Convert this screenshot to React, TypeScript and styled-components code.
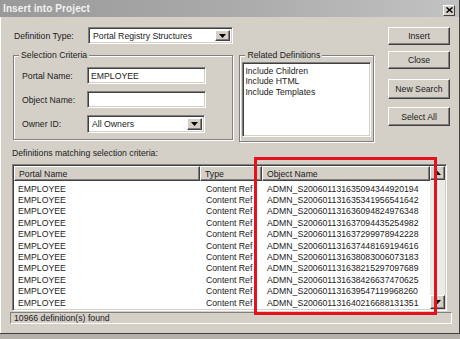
import React from 'react';
import styled, { createGlobalStyle } from 'styled-components';

const rows = [
  'ADMN_S20060113163509434492019 4',
  'ADMN_S20060113163534195654164 2',
  'ADMN_S20060113163609482497634 8',
  'ADMN_S20060113163709443525498 2',
  'ADMN_S20060113163729997894222 8',
  'ADMN_S20060113163744816919461 6',
  'ADMN_S20060113163808300607318 3',
  'ADMN_S20060113163821529709768 9',
  'ADMN_S20060113163842663747062 5',
  'ADMN_S20060113163954711996826 0',
  'ADMN_S20060113164021668813135 1',
].map((s) => s.replace(' ', ''));

const columns = [
  { title: 'Portal Name', width: 186 },
  { title: 'Type', width: 62 },
  { title: 'Object Name', width: 168 },
];

const ArrowDown = () => (
  <svg width="7" height="4" viewBox="0 0 7 4">
    <path d="M0 0h7L3.5 4z" fill="#000" />
  </svg>
);

const ArrowUp = () => (
  <svg width="7" height="4" viewBox="0 0 7 4">
    <path d="M0 4h7L3.5 0z" fill="#000" />
  </svg>
);

export default function App() {
  return (
    <>
      <GlobalStyle />
      <Window>
        <TitleBar>
          <TitleText>Insert into Project</TitleText>
          <CloseBox>
            <svg width="7" height="6" viewBox="0 0 7 6">
              <path d="M0.5 0.5l6 5M6.5 0.5l-6 5" stroke="#000" strokeWidth="1.5" />
            </svg>
          </CloseBox>
        </TitleBar>

        <Main>
          <TopArea>
            <LeftColumn>
              <DefRow>
                <DefLabel>Definition Type:</DefLabel>
                <Combo $width={145}>
                  <ComboText>Portal Registry Structures</ComboText>
                  <DropButton><ArrowDown /></DropButton>
                </Combo>
              </DefRow>

              <GroupsRow>
                <GroupBox $width={221} $height={85} $ml={1}>
                  <Caption>Selection Criteria</Caption>
                  <CriteriaGrid>
                    <FieldLabel>Portal Name:</FieldLabel>
                    <TextInput>EMPLOYEE</TextInput>
                    <FieldLabel>Object Name:</FieldLabel>
                    <TextInput />
                    <FieldLabel>Owner ID:</FieldLabel>
                    <Combo $width={118} $height={18}>
                      <ComboText>All Owners</ComboText>
                      <DropButton><ArrowDown /></DropButton>
                    </Combo>
                  </CriteriaGrid>
                </GroupBox>

                <GroupBox $width={135} $height={87} $ml={6}>
                  <Caption>Related Definitions</Caption>
                  <RelatedInner>
                    <ListBox>
                      <ListItem>Include Children</ListItem>
                      <ListItem>Include HTML</ListItem>
                      <ListItem>Include Templates</ListItem>
                    </ListBox>
                  </RelatedInner>
                </GroupBox>
              </GroupsRow>
            </LeftColumn>

            <ButtonColumn>
              <PushButton $h={18} $mt={0}>Insert</PushButton>
              <PushButton $h={18} $mt={6}>Close</PushButton>
              <PushButton $h={20} $mt={10}>New Search</PushButton>
              <PushButton $h={19} $mt={8}>Select All</PushButton>
            </ButtonColumn>
          </TopArea>

          <MatchLabel>Definitions matching selection criteria:</MatchLabel>

          <ListView>
            <ListArea>
              <HeaderRow>
                {columns.map((c) => (
                  <HeaderCell key={c.title} $width={c.width}>{c.title}</HeaderCell>
                ))}
              </HeaderRow>
              <RowsBox>
                {rows.map((name) => (
                  <DataRow key={name}>
                    <Cell $width={186} $pad={4}>EMPLOYEE</Cell>
                    <Cell $width={62} $pad={6}>Content Ref</Cell>
                    <Cell $width={168} $pad={5}>{name}</Cell>
                  </DataRow>
                ))}
              </RowsBox>
            </ListArea>
            <ScrollBar>
              <ScrollButton><ArrowUp /></ScrollButton>
              <ScrollTrack />
              <ScrollButton><ArrowDown /></ScrollButton>
            </ScrollBar>
          </ListView>

          <StatusBar>10966 definition(s) found</StatusBar>
        </Main>

        <Highlight />
      </Window>
    </>
  );
}

// --- Styled Components ---

const GlobalStyle = createGlobalStyle`
  html, body {
    margin: 0;
    padding: 0;
    background: #b4b1ab;
  }
  body {
    font-family: "Liberation Sans", Arial, sans-serif;
    font-size: 8.7px;
    color: #1a1a1a;
  }
  * { box-sizing: border-box; }
`;

const Window = styled.div`
  position: relative;
  width: 460px;
  height: 334px;
  background: #d4d0c8;
  border-right: 1px solid #404040;
  border-bottom: 1px solid #404040;
  box-shadow: inset 1px 0 0 #ffffff;
  display: flex;
  flex-direction: column;
  overflow: hidden;
`;

// Title bar
const TitleBar = styled.div`
  height: 17px;
  flex-shrink: 0;
  display: flex;
  align-items: center;
  justify-content: space-between;
  padding: 0 4px 0 3px;
  background: linear-gradient(90deg, #999999 0%, #aaaaaa 50%, #c2c2c2 100%);
`;

const TitleText = styled.span`
  font-size: 10px;
  font-weight: 700;
  color: #f2f2f2;
  letter-spacing: 0.1px;
`;

const CloseBox = styled.div`
  width: 12px;
  height: 11px;
  margin-top: 3px;
  display: flex;
  align-items: center;
  justify-content: center;
  background: #d4d0c8;
  border: 1px solid;
  border-color: #ffffff #404040 #404040 #ffffff;
`;

// Main body
const Main = styled.div`
  padding: 10px 0 0 12px;
  display: flex;
  flex-direction: column;
`;

const TopArea = styled.div`
  display: flex;
  gap: 14px;
`;

const LeftColumn = styled.div`
  width: 362px;
  display: flex;
  flex-direction: column;
`;

const DefRow = styled.div`
  height: 17px;
  display: flex;
  align-items: center;
  padding-left: 2px;
`;

const DefLabel = styled.span`
  width: 74px;
`;

const sunken = `
  background: #ffffff;
  border: 1px solid;
  border-color: #808080 #ffffff #ffffff #808080;
  box-shadow: inset 1px 1px 0 #404040, inset -1px -1px 0 #d4d0c8;
`;

const raised = `
  background: #d4d0c8;
  border: 1px solid;
  border-color: #ffffff #404040 #404040 #ffffff;
  box-shadow: inset -1px -1px 0 #808080;
`;

const Combo = styled.div<{ $width: number; $height?: number }>`
  ${sunken}
  width: ${(p) => p.$width}px;
  height: ${(p) => p.$height ?? 17}px;
  display: flex;
  align-items: center;
  padding: 2px;
`;

const ComboText = styled.span`
  flex: 1;
  padding-left: 2px;
  white-space: nowrap;
  overflow: hidden;
`;

const DropButton = styled.div`
  ${raised}
  width: 15px;
  height: 100%;
  display: flex;
  align-items: center;
  justify-content: center;
`;

const GroupsRow = styled.div`
  display: flex;
  align-items: flex-start;
  margin-top: 11px;
`;

const GroupBox = styled.div<{ $width: number; $height: number; $ml: number }>`
  position: relative;
  width: ${(p) => p.$width}px;
  height: ${(p) => p.$height}px;
  margin-left: ${(p) => p.$ml}px;
  border: 1px solid #808080;
  box-shadow: inset 1px 1px 0 #ffffff, 1px 1px 0 #ffffff;
`;

const Caption = styled.span`
  position: absolute;
  top: -6px;
  left: 5px;
  padding: 0 2px;
  line-height: 11px;
  background: #d4d0c8;
  white-space: nowrap;
`;

const CriteriaGrid = styled.div`
  display: grid;
  grid-template-columns: 65px 119px;
  row-gap: 7px;
  align-items: center;
  padding: 11px 0 0 8px;
`;

const FieldLabel = styled.span``;

const TextInput = styled.div`
  ${sunken}
  height: 17px;
  padding: 0 3px;
  display: flex;
  align-items: center;
`;

const RelatedInner = styled.div`
  padding: 6px 2px 3px 2px;
  height: 100%;
`;

const ListBox = styled.div`
  ${sunken}
  height: 75px;
  padding: 3px 2px;
`;

const ListItem = styled.div`
  line-height: 10.3px;
  white-space: nowrap;
`;

const ButtonColumn = styled.div`
  width: 62px;
  display: flex;
  flex-direction: column;
`;

const PushButton = styled.div<{ $h: number; $mt: number }>`
  ${raised}
  height: ${(p) => p.$h}px;
  margin-top: ${(p) => p.$mt}px;
  display: flex;
  align-items: center;
  justify-content: center;
  white-space: nowrap;
`;

const MatchLabel = styled.div`
  margin-top: 6px;
  line-height: 11px;
`;

// List view
const ListView = styled.div`
  ${sunken}
  margin-top: 5px;
  width: 435px;
  height: 147px;
  padding: 1px;
  display: flex;
`;

const ListArea = styled.div`
  width: 416px;
  display: flex;
  flex-direction: column;
  overflow: hidden;
`;

const HeaderRow = styled.div`
  display: flex;
  height: 15px;
  flex-shrink: 0;
`;

const HeaderCell = styled.div<{ $width: number }>`
  ${raised}
  width: ${(p) => p.$width}px;
  padding-left: 4px;
  display: flex;
  align-items: center;
  white-space: nowrap;
  overflow: hidden;
`;

const RowsBox = styled.div`
  padding-top: 2px;
`;

const DataRow = styled.div`
  display: flex;
  height: 11.4px;
  align-items: center;
`;

const Cell = styled.div<{ $width: number; $pad: number }>`
  width: ${(p) => p.$width}px;
  padding-left: ${(p) => p.$pad}px;
  white-space: nowrap;
  overflow: hidden;
`;

const ScrollBar = styled.div`
  width: 15px;
  display: flex;
  flex-direction: column;
`;

const ScrollButton = styled.div`
  ${raised}
  height: 14px;
  display: flex;
  align-items: center;
  justify-content: center;
`;

const ScrollTrack = styled.div`
  flex: 1;
  background: #ecebe7;
`;

const StatusBar = styled.div`
  margin: 1px 0 0 -2px;
  width: 442px;
  height: 12px;
  padding-left: 3px;
  display: flex;
  align-items: center;
  border: 1px solid;
  border-color: #808080 #ffffff #ffffff #808080;
`;

// Red annotation frame drawn over the list
const Highlight = styled.div`
  position: absolute;
  left: 254px;
  top: 157px;
  width: 183px;
  height: 158px;
  border: 3px solid #e3121c;
  pointer-events: none;
`;
